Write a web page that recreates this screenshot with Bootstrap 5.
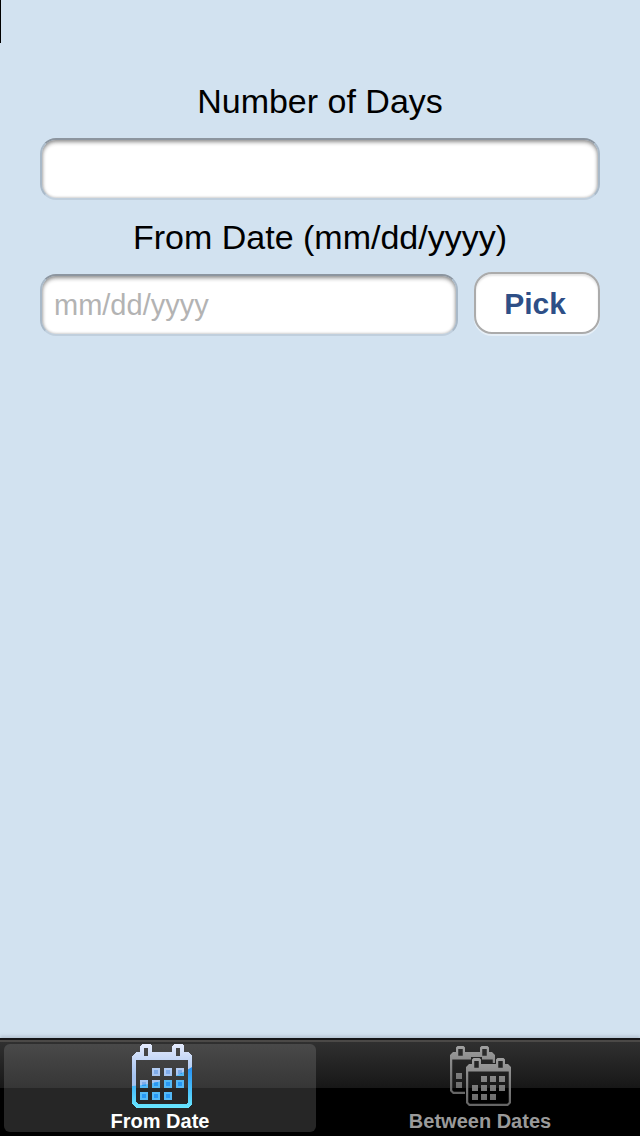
<!DOCTYPE html>
<html lang="en">
<head>
<meta charset="utf-8">
<meta name="viewport" content="width=device-width, initial-scale=1">
<title>From Date</title>
<link href="https://cdn.jsdelivr.net/npm/bootstrap@5.3.0/dist/css/bootstrap.min.css" rel="stylesheet">
<style>
  body { background: #d2e2f0; color: #000; font-family: "Liberation Sans", Arial, sans-serif; }
  .cursor-mark { position: absolute; left: 0; top: 0; width: 1px; height: 43px; background: #000; }
  main { padding: 80px 40px 0; }
  .field-label { font-size: 34px; line-height: 42px; margin-bottom: 16px; }
  .field-gap { margin-top: 16px; }
  .form-control.inset-field {
    height: 62px; padding: 0 12px; font-size: 29px; color: #000;
    border: 2px solid; border-color: #8c959f #a9b9c8 #c0cfdd; border-radius: 16px;
    box-shadow: inset 0 2px 4px #8f8f8f, inset 0 0 3px #c4c4c4;
  }
  .inset-field::placeholder { color: #b3b3b3; opacity: 1; }
  .btn.pick-button {
    width: 126px; height: 62px; margin-top: -2px; padding: 0 4px 0 0; font-size: 30px; font-weight: 700; color: #2e4f87;
    background: #fff; border: 2px solid #ababab; border-radius: 18px;
    box-shadow: inset 0 2px 2px #e4e4e4, 0 2px 0 #e6eff7;
  }
  .tab-strip {
    height: 98px; padding: 4px; border-top: 2px solid #151518;
    background: linear-gradient(#4b4947 0 2px, #303030 2px, #171717 48px, #000 48px);
    box-shadow: 0 -2px 3px #8a95a566;
  }
  .tab-strip .nav-link {
    height: 88px; padding: 0; border-radius: 6px; color: #9a9a9a;
    font-size: 20px; line-height: 22px; font-weight: 700;
  }
  .tab-strip .nav-link.active { color: #fff; background: linear-gradient(#494949, #363636 44px, #262626 44px); }
  .tab-strip svg { display: block; height: 66px; margin: 0 auto; }
</style>
</head>
<body class="min-vh-100 d-flex flex-column">
<div class="cursor-mark"></div>
<main class="flex-grow-1">
  <form>
    <label for="days" class="field-label d-block text-center">Number of Days</label>
    <input id="days" type="text" inputmode="numeric" class="form-control inset-field">
    <label for="from" class="field-label field-gap d-block text-center">From Date (mm/dd/yyyy)</label>
    <div class="d-flex gap-3">
      <input id="from" type="text" class="form-control inset-field" placeholder="mm/dd/yyyy">
      <button type="button" class="btn pick-button flex-shrink-0">Pick</button>
    </div>
  </form>
</main>
<nav class="tab-strip nav nav-fill flex-nowrap gap-2" aria-label="Calculators">
  <a href="#from-date" class="nav-link active w-50" aria-current="page">
    <svg width="64" height="66" viewBox="-4 0 64 66" shape-rendering="crispEdges" aria-hidden="true">
      <defs>
        <linearGradient id="ice" gradientUnits="userSpaceOnUse" x1="0" y1="0" x2="0" y2="64">
          <stop offset="0" stop-color="#e4eafc"/><stop offset=".5" stop-color="#a5c4f1"/>
        </linearGradient>
        <linearGradient id="sea" gradientUnits="userSpaceOnUse" x1="0" y1="24" x2="0" y2="64">
          <stop offset="0" stop-color="#2692f4"/><stop offset="1" stop-color="#68e6ff"/>
        </linearGradient>
        <!-- calendar outline, hollow rings and page -->
        <path id="cal-frame" fill-rule="evenodd" d="M10 0h8l2 2v6h20V2l2-2h8l2 2v6h4l4 4v48l-4 4H4l-4-4V12l4-4h4V2zM12 4v8h4V4zM44 4v8h4V4zM4 16v42l2 2h48l2-2V16z"/>
        <path id="cal-days" d="M20 24h8v8h-8zM32 24h8v8h-8zM44 24h8v8h-8zM8 36h8v8H8zM20 36h8v8h-8zM32 36h8v8h-8zM44 36h8v8h-8zM8 48h8v8H8zM20 48h8v8h-8zM32 48h8v8h-8z"/>
        <path id="cal-cores" d="M22 26h4v4h-4zM34 26h4v4h-4zM46 26h4v4h-4zM10 38h4v4h-4zM22 38h4v4h-4zM34 38h4v4h-4zM46 38h4v4h-4zM10 50h4v4h-4zM22 50h4v4h-4zM34 50h4v4h-4z"/>
        <clipPath id="gloss"><path d="M0 42Q34 40 60 23V66H0z"/></clipPath>
      </defs>
      <g fill="url(#ice)"><use href="#cal-frame"/><use href="#cal-days"/></g>
      <use href="#cal-cores" fill="#7facea"/>
      <g clip-path="url(#gloss)">
        <g fill="url(#sea)"><use href="#cal-frame"/><use href="#cal-days" fill="#55b9f5"/></g>
        <use href="#cal-cores" fill="#2898f5"/>
      </g>
    </svg>
    From Date
  </a>
  <a href="#between-dates" class="nav-link w-50">
    <svg width="64" height="66" viewBox="-2 0 64 66" aria-hidden="true">
      <defs>
        <linearGradient id="ash" gradientUnits="userSpaceOnUse" x1="0" y1="0" x2="0" y2="64">
          <stop offset="0" stop-color="#a0a0a0"/><stop offset=".25" stop-color="#8f8f8f"/><stop offset="1" stop-color="#646464"/>
        </linearGradient>
        <!-- keeps the rear calendar clear of the front one -->
        <clipPath id="rear"><path d="M0 0h46v19H32v-6H21v6h-6v32H0z"/></clipPath>
        <path id="cal-thin" fill-rule="evenodd" d="M10 0h8l2 2v6h20V2l2-2h8l2 2v6h4l4 4v48l-4 4H4l-4-4V12l4-4h4V2zM11 4v9h6V4zM43 4v9h6V4zM3 18v41l2 2h50l2-2V18z"/>
      </defs>
      <g clip-path="url(#rear)"><g transform="translate(0 2) scale(.75)" fill="url(#ash)"><use href="#cal-thin"/><use href="#cal-days"/></g></g>
      <g transform="translate(16 14) scale(.75)" fill="url(#ash)"><use href="#cal-thin"/><use href="#cal-days"/></g>
    </svg>
    Between Dates
  </a>
</nav>
<script src="https://cdn.jsdelivr.net/npm/bootstrap@5.3.0/dist/js/bootstrap.bundle.min.js"></script>
</body>
</html>
